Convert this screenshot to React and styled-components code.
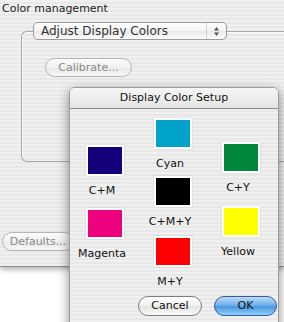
import React from "react";
import styled, { createGlobalStyle } from "styled-components";

const GlobalStyle = createGlobalStyle`
  html, body {
    margin: 0;
    padding: 0;
    background: #fff;
  }
  body {
    font-family: "DejaVu Sans", "Liberation Sans", sans-serif;
    font-size: 11px;
    color: #1a1a1a;
  }
`;

const pinstripe = `repeating-linear-gradient(180deg, #f0f0f0 0px, #f0f0f0 2px, #e8e8e8 2px, #e8e8e8 4px)`;

const swatches = [
  [
    { label: "C+M", color: "#13007a", gap: 0 },
    { label: "Magenta", color: "#ee007f", gap: 10 },
  ],
  [
    { label: "Cyan", color: "#00a2c9", gap: 0 },
    { label: "C+M+Y", color: "#000000", gap: 5 },
    { label: "M+Y", color: "#ff0000", gap: 7 },
  ],
  [
    { label: "C+Y", color: "#00873c", gap: 0 },
    { label: "Yellow", color: "#ffff00", gap: 11 },
  ],
];

const columnTops = [36, 9, 33];

const App = () => {
  return (
    <>
      <GlobalStyle />
      <Screen>
        <Window>
          <Heading>Color management</Heading>
          <Group>
            <Popup>
              <PopupText>Adjust Display Colors</PopupText>
              <Stepper>
                <svg width="7" height="11" viewBox="0 0 7 11">
                  <path d="M3.5 1 L6 4.5 L1 4.5 Z" fill="#555" />
                  <path d="M3.5 10 L6 6.5 L1 6.5 Z" fill="#555" />
                </svg>
              </Stepper>
            </Popup>
            <PillButton $width={87} $offset={23} $top={18} disabled>
              Calibrate...
            </PillButton>
          </Group>
          <PillButton $width={72} $offset={2} $top={70} disabled>
            Defaults...
          </PillButton>
        </Window>

        <Dialog>
          <TitleBar>Display Color Setup</TitleBar>
          <Columns>
            {swatches.map((col, i) => (
              <Column key={i} $top={columnTops[i]}>
                {col.map(s => (
                  <Item key={s.label} $gap={s.gap}>
                    <Swatch $color={s.color} />
                    <Label>{s.label}</Label>
                  </Item>
                ))}
              </Column>
            ))}
          </Columns>
          <ButtonRow>
            <AquaButton>Cancel</AquaButton>
            <AquaButton $primary>OK</AquaButton>
          </ButtonRow>
        </Dialog>
      </Screen>
    </>
  );
};

export default App;

const Screen = styled.div`
  position: relative;
  width: 284px;
  height: 322px;
  overflow: hidden;
  background: #fff;
`;

const Window = styled.div`
  height: 266px;
  background: ${pinstripe};
  border-bottom: 1px solid #8e8e8e;
  box-shadow: 0 2px 6px rgba(0, 0, 0, 0.35);
  display: flex;
  flex-direction: column;
  overflow: hidden;
`;

const Heading = styled.div`
  padding: 1px 0 0 2px;
  line-height: 15px;
  font-size: 11px;
  color: #222;
`;

const Group = styled.div`
  margin: 15px 0 0 21px;
  width: 290px;
  height: 131px;
  box-sizing: border-box;
  border: 1px solid #a8a8a8;
  border-right: none;
  border-radius: 6px 0 0 6px;
  box-shadow: inset 1px 1px 0 rgba(255, 255, 255, 0.7);
  display: flex;
  flex-direction: column;
  align-items: flex-start;
`;

const Popup = styled.div`
  margin: -10px 0 0 11px;
  width: 194px;
  height: 18px;
  box-sizing: border-box;
  border: 1px solid #9a9a9a;
  border-radius: 5px;
  background: linear-gradient(180deg, #ffffff 0%, #f3f3f3 50%, #e9e9e9 51%, #fafafa 100%);
  display: flex;
  align-items: center;
`;

const PopupText = styled.span`
  flex: 1;
  padding-left: 7px;
  color: #333;
  font-size: 12px;
  line-height: 16px;
`;

const Stepper = styled.span`
  width: 19px;
  height: 16px;
  border-left: 1px solid #d0d0d0;
  display: flex;
  align-items: center;
  justify-content: center;
`;

const PillButton = styled.button`
  margin: ${p => p.$top}px 0 0 ${p => p.$offset}px;
  width: ${p => p.$width}px;
  height: 19px;
  padding: 0;
  border: 1px solid #b4b4b4;
  border-radius: 10px;
  background: linear-gradient(180deg, #fbfbfb 0%, #f1f1f1 50%, #e8e8e8 51%, #f7f7f7 100%);
  font-family: "DejaVu Sans", "Liberation Sans", sans-serif;
  font-size: 11px;
  color: #8a8a8a;
  line-height: 17px;
`;

const Dialog = styled.div`
  position: absolute;
  left: 69px;
  top: 87px;
  width: 210px;
  height: 250px;
  box-sizing: border-box;
  border: 1px solid #9c9c9c;
  border-radius: 6px 6px 0 0;
  background: ${pinstripe};
  box-shadow: 0 4px 12px rgba(0, 0, 0, 0.45);
  display: flex;
  flex-direction: column;
`;

const TitleBar = styled.div`
  height: 20px;
  border-bottom: 1px solid #8a8a8a;
  border-radius: 5px 5px 0 0;
  background: linear-gradient(180deg, #f6f6f6 0%, #e4e4e4 100%);
  text-align: center;
  line-height: 20px;
  font-size: 11px;
  color: #111;
`;

const Columns = styled.div`
  height: 184px;
  padding-left: 2px;
  display: flex;
  gap: 8px;
`;

const Column = styled.div`
  width: 60px;
  padding-top: ${p => p.$top}px;
  display: flex;
  flex-direction: column;
  align-items: center;
`;

const Item = styled.div`
  margin-top: ${p => p.$gap}px;
  display: flex;
  flex-direction: column;
  align-items: center;
`;

const Swatch = styled.div`
  margin-left: 6px;
  width: 38px;
  height: 31px;
  box-sizing: border-box;
  border: 2px solid #fff;
  background: ${p => p.$color};
  box-shadow: 0 0 1px rgba(0, 0, 0, 0.25);
`;

const Label = styled.div`
  margin-top: 8px;
  line-height: 14px;
  font-size: 11px;
  color: #111;
  white-space: nowrap;
`;

const ButtonRow = styled.div`
  padding: 3px 1px 0 0;
  display: flex;
  justify-content: flex-end;
  gap: 12px;
`;

const AquaButton = styled.button`
  width: ${p => (p.$primary ? 63 : 64)}px;
  height: 20px;
  padding: 0;
  border: 1px solid ${p => (p.$primary ? "#3b5b95" : "#7d7d7d")};
  border-radius: 10px;
  background: ${p =>
    p.$primary
      ? "linear-gradient(180deg, #b9dcf8 0%, #6fb0ea 45%, #4a97e0 55%, #8ed0ff 100%)"
      : "linear-gradient(180deg, #ffffff 0%, #f2f2f2 45%, #e2e2e2 55%, #fbfbfb 100%)"};
  font-family: "DejaVu Sans", "Liberation Sans", sans-serif;
  font-size: 11px;
  color: #111;
  line-height: 18px;
`;
